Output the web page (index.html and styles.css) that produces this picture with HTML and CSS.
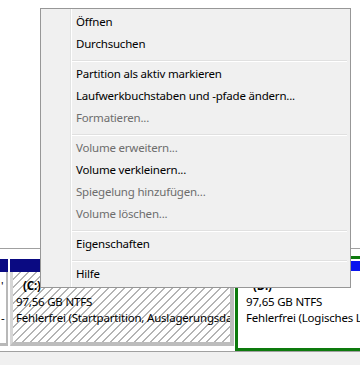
FILE: index.html
```html
<!DOCTYPE html>
<html lang="de">
<head>
<meta charset="utf-8">
<title>Datenträgerverwaltung</title>
<link rel="stylesheet" href="styles.css">
</head>
<body>
<div class="screen">
  <div class="upper"></div>
  <div class="disk">
    <div class="part prev">
      <div class="hdr navy"></div>
      <div class="body plain">
        <div class="line">'</div>
        <div class="line">&nbsp;</div>
        <div class="line">-</div>
      </div>
    </div>
    <div class="part pc">
      <div class="hdr navy"></div>
      <div class="body hatched">
        <div class="line lbl">(C:)</div>
        <div class="line">97,56 GB NTFS</div>
        <div class="line">Fehlerfrei (Startpartition, Auslagerungsdatei, Absturzabbild, Primäre Partition)</div>
      </div>
    </div>
    <div class="ext">
      <div class="part pd">
        <div class="hdr blue"></div>
        <div class="body plain dbody">
          <div class="line lbl">(D:)</div>
          <div class="line">97,65 GB NTFS</div>
          <div class="line">Fehlerfrei (Logisches Laufwerk)</div>
        </div>
      </div>
    </div>
  </div>
  <div class="status"></div>

  <div class="menu">
    <div class="item">Öffnen</div>
    <div class="item">Durchsuchen</div>
    <div class="sep"></div>
    <div class="item">Partition als aktiv markieren</div>
    <div class="item">Laufwerkbuchstaben und -pfade ändern...</div>
    <div class="item off">Formatieren...</div>
    <div class="sep"></div>
    <div class="item off">Volume erweitern...</div>
    <div class="item">Volume verkleinern...</div>
    <div class="item off">Spiegelung hinzufügen...</div>
    <div class="item off">Volume löschen...</div>
    <div class="sep"></div>
    <div class="item">Eigenschaften</div>
    <div class="sep"></div>
    <div class="item">Hilfe</div>
  </div>
</div>
</body>
</html>
```

FILE: styles.css
```css
* { box-sizing: border-box; }
html, body { margin: 0; padding: 0; }
body {
  background: #fff;
  font-family: "Noto Sans", "Open Sans", sans-serif;
  font-size: 11.5px;
  letter-spacing: -0.2px;
  color: #000;
}
.screen {
  position: relative;
  width: 360px;
  height: 365px;
  overflow: hidden;
  display: flex;
  flex-direction: column;
}
.upper {
  height: 249px;
  flex: none;
  border-bottom: 1px solid #a0a0a0;
  background: #fff;
}
.disk {
  height: 102px;
  flex: none;
  display: flex;
  padding-top: 7px;
  background: #fff;
}
.status {
  flex: 1;
  border-top: 1px solid #a0a0a0;
  background: #f0f0f0;
}
.part {
  display: flex;
  flex-direction: column;
}
.prev { width: 8px; margin-top: 3px; margin-right: 2px; flex: none; }
.pc { width: 224px; margin-top: 3px; margin-right: 1px; flex: none; }
.hdr { height: 13px; flex: none; }
.navy { background: #0a0a82; }
.blue { background: #0a14ef; height: 10px; }
.body {
  height: 74px;
  flex: none;
  overflow: hidden;
  white-space: nowrap;
  padding-top: 6px;
}
.plain { background: #fff; }
.prev .body {
  border-right: 2px solid #b8b8b8;
  border-bottom: 3px solid #b8b8b8;
  padding-left: 1px;
}
.hatched {
  background: repeating-linear-gradient(135deg, #fff 0 4.6px, #b4b4b4 4.6px 5.66px);
  border-left: 3px solid #d6d6d6;
  border-right: 4px solid #bdbdbd;
  border-bottom: 4px solid #bdbdbd;
  padding-left: 3px;
  height: 74px;
}
.line {
  height: 16px;
  line-height: 16px;
}
.lbl {
  font-weight: bold;
  padding-left: 7px;
}
.ext {
  flex: 1;
  border: 3px solid #0d7a0d;
  border-right: none;
  padding: 2px 0 0 0;
  display: flex;
  min-width: 0;
  overflow: hidden;
  background: #fff;
}
.pd { flex: 1; min-width: 0; }
.dbody {
  height: auto;
  flex: 1;
  padding-top: 7px;
  padding-left: 8px;
}
.dbody .lbl { padding-left: 7px; }

.menu {
  position: absolute;
  left: 40px;
  top: 8px;
  width: 311px;
  height: 280px;
  border: 1px solid #979797;
  padding: 2px;
  background: linear-gradient(to right, #f0f0f0 0 29px, #e2e3e3 29px 30px, #fff 30px 31px, #f0f0f0 31px);
}
.item {
  height: 22px;
  line-height: 22px;
  padding-left: 33px;
  color: #000;
  white-space: nowrap;
}
.item.off { color: #6d6d6d; }
.sep {
  height: 8px;
  margin-left: 29px;
  margin-right: 1px;
  background: linear-gradient(to bottom, transparent 0 5px, #e0e0e0 5px 6px, #fff 6px 7px, transparent 7px);
}
```
